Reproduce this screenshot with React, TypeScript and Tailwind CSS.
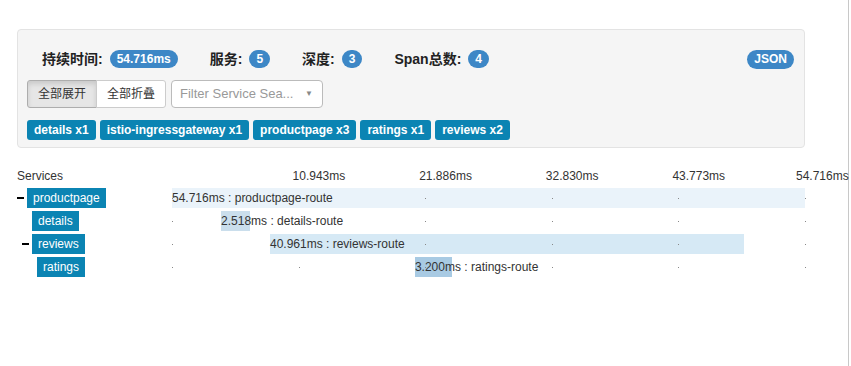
import React from 'react';

const total = 54.716;

const ticks = ['10.943ms', '21.886ms', '32.830ms', '43.773ms', '54.716ms'];

const tags = ['details x1', 'istio-ingressgateway x1', 'productpage x3', 'ratings x1', 'reviews x2'];

const spans = [
  { name: 'productpage', level: 0, toggle: true, start: 0, dur: 54.716, route: 'productpage-route', color: '#eaf3fa' },
  { name: 'details', level: 1, toggle: false, start: 4.24, dur: 2.518, route: 'details-route', color: '#cadeec' },
  { name: 'reviews', level: 1, toggle: true, start: 8.47, dur: 40.961, route: 'reviews-route', color: '#d6e9f5' },
  { name: 'ratings', level: 2, toggle: false, start: 21.0, dur: 3.2, route: 'ratings-route', color: '#a8cae3' },
];

const font = { fontFamily: '"Liberation Sans", "Noto Sans CJK SC", Arial, sans-serif' };

function Badge({ children }: { children: React.ReactNode }) {
  return (
    <span className="inline-block rounded-[10px] bg-[#3d87c6] px-[7px] py-[3px] text-[12px] font-bold leading-[12px] text-white">
      {children}
    </span>
  );
}

function Stat({ label, value }: { label: string; value: string }) {
  return (
    <div className="flex items-center gap-[7px]">
      <span className="text-[14px] font-bold text-[#222]">{label}</span>
      <Badge>{value}</Badge>
    </div>
  );
}

export default function App() {
  return (
    <div style={font} className="h-[366px] w-[849px] border-r border-[#c8c8c8] bg-white pl-[17px] pt-[29px] text-[#333]">
      {/* summary panel */}
      <div className="w-[788px] rounded-[4px] border border-[#e3e3e3] bg-[#f5f5f5] pb-[7px] pl-[9px] pr-[10px] pt-[19px]">
        <div className="flex h-[20px] items-center justify-between pl-[15px]">
          <div className="flex items-center gap-[32px]">
            <Stat label="持续时间:" value="54.716ms" />
            <Stat label="服务:" value="5" />
            <Stat label="深度:" value="3" />
            <Stat label="Span总数:" value="4" />
          </div>
          <span className="inline-block rounded-[10px] bg-[#3d87c6] px-[7px] py-[3px] text-[12px] font-bold leading-[13px] text-white">
            JSON
          </span>
        </div>

        <div className="mt-[11px] flex items-center gap-[5px]">
          <div className="flex">
            <button className="h-[28px] rounded-l-[3px] border border-[#adadad] bg-[#e6e6e6] px-[10px] text-[12px] text-[#333] shadow-[inset_0_3px_5px_rgba(0,0,0,0.125)]">
              全部展开
            </button>
            <button className="-ml-px h-[28px] rounded-r-[3px] border border-[#ccc] bg-white px-[10px] text-[12px] text-[#333]">
              全部折叠
            </button>
          </div>
          <div className="flex h-[28px] w-[152px] items-center justify-between rounded-[4px] border border-[#bbb] bg-white pl-[8px] pr-[9px]">
            <span className="text-[13px] text-[#999]">Filter Service Sea...</span>
            <span className="text-[8px] text-[#888]">▼</span>
          </div>
        </div>

        <div className="mt-[12px] flex gap-[4px]">
          {tags.map((t) => (
            <span key={t} className="flex h-[20px] items-center rounded-[3px] bg-[#0b84b3] px-[7px] text-[12px] font-bold text-white">
              {t}
            </span>
          ))}
        </div>
      </div>

      {/* timeline */}
      <div className="mt-[20px] w-[788px]">
        <div className="flex h-[16px] items-center text-[12px]">
          <div className="w-[155px]">Services</div>
          <div className="relative h-full flex-1">
            {ticks.map((t, i) => (
              <span
                key={t}
                className="absolute top-0 whitespace-nowrap leading-[16px]"
                style={{ left: i === 4 ? 'calc(100% - 9px)' : `calc(${(i + 1) * 20}% - 6px)` }}
              >
                {t}
              </span>
            ))}
          </div>
        </div>

        <div className="mt-[4px] flex flex-col gap-[3px]">
          {spans.map((s) => (
            <div key={s.name} className="flex h-[20px]">
              <div className="flex w-[155px] items-center" style={{ paddingLeft: s.level * 5 }}>
                <div className="flex w-[10px] items-center">
                  {s.toggle && <div className="h-[2px] w-[7px] bg-black" />}
                </div>
                <span className="flex h-[20px] items-center bg-[#0b84b3] px-[6px] text-[12px] text-white">{s.name}</span>
              </div>
              <div className="relative h-full flex-1 text-[12px]">
                <div
                  className="absolute top-0 h-full"
                  style={{ left: `${(s.start / total) * 100}%`, width: `${(s.dur / total) * 100}%`, backgroundColor: s.color }}
                />
                {[0, 1, 2, 3, 4, 5].map((i) => (
                  <div
                    key={i}
                    className="absolute top-[10px] h-[1px] w-[1px] bg-[#888]"
                    style={{ left: `${i * 20}%` }}
                  />
                ))}
                <span
                  className="absolute top-0 whitespace-nowrap leading-[20px] text-[#333]"
                  style={{ left: `${(s.start / total) * 100}%` }}
                >
                  {s.dur.toFixed(3)}ms : {s.route}
                </span>
              </div>
            </div>
          ))}
        </div>
      </div>
    </div>
  );
}
